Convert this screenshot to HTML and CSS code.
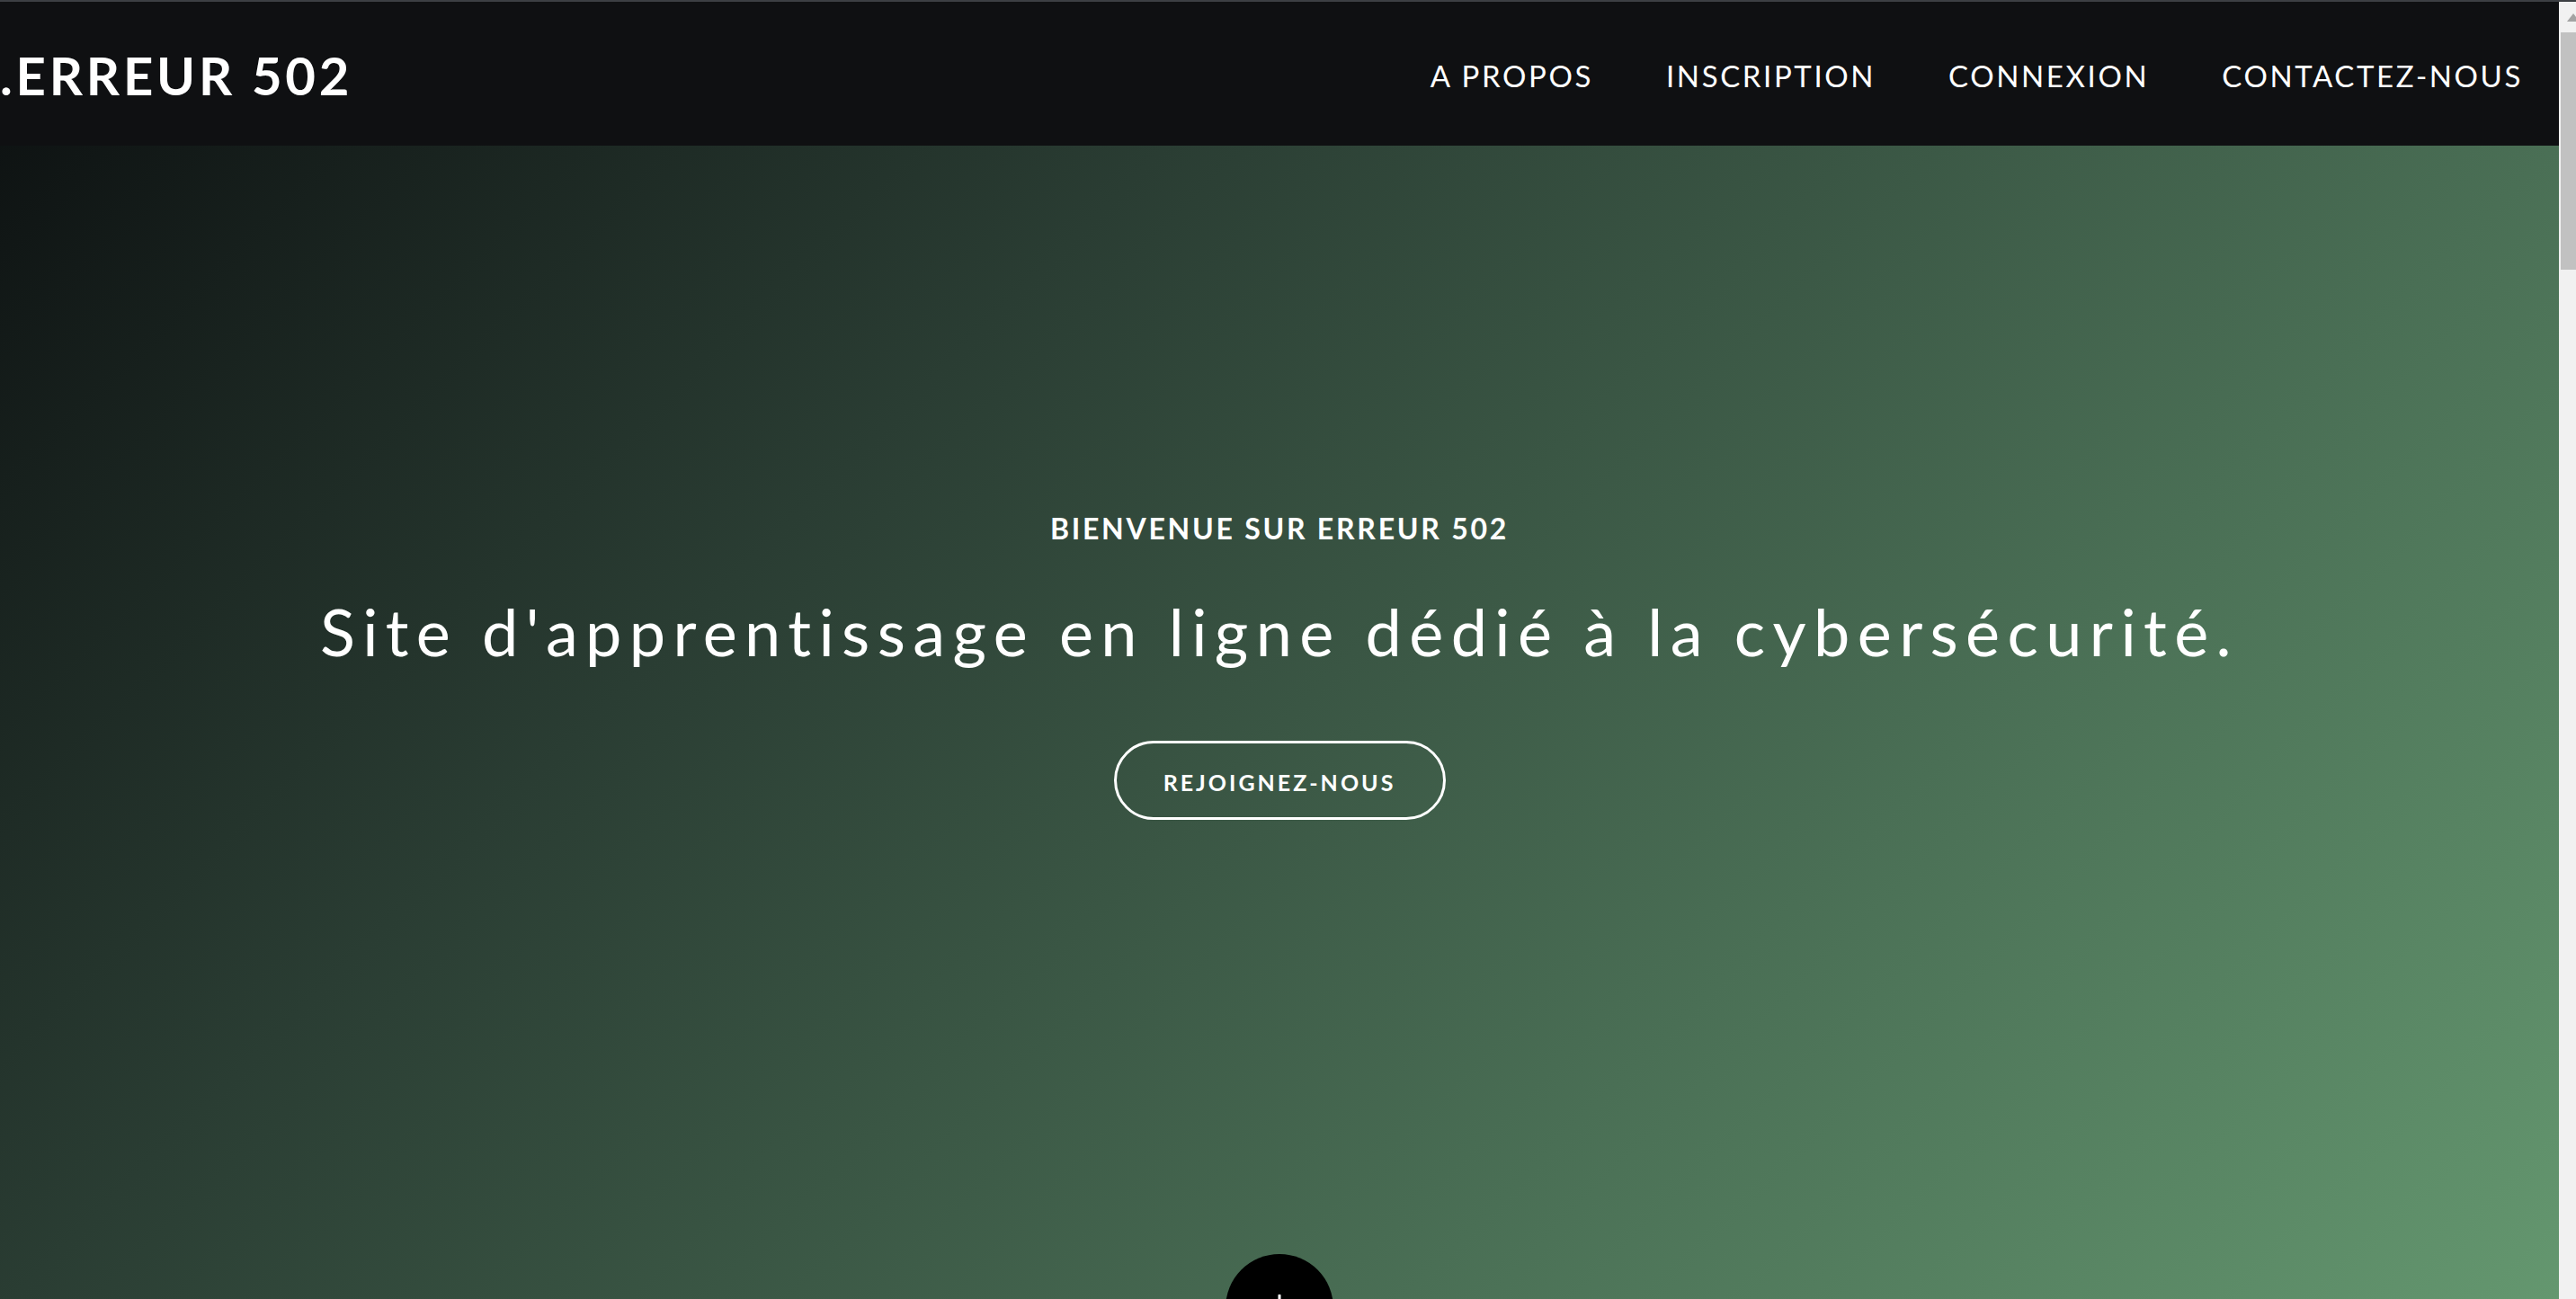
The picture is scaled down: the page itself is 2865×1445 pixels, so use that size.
FILE: index.html
```html
<!DOCTYPE html>
<html lang="fr">
<head>
<meta charset="utf-8">
<title>Erreur 502</title>
<link rel="stylesheet" href="styles.css">
</head>
<body>
<div class="chrome-line"></div>
<div class="window">
  <main class="page">
    <header class="topbar">
      <a class="logo" href="#">.ERREUR 502</a>
      <nav class="menu">
        <a class="menu-link" href="#">A PROPOS</a>
        <a class="menu-link" href="#">INSCRIPTION</a>
        <a class="menu-link" href="#">CONNEXION</a>
        <a class="menu-link" href="#">CONTACTEZ-NOUS</a>
      </nav>
    </header>
    <section class="hero">
      <p class="hero-kicker">BIENVENUE SUR ERREUR 502</p>
      <h1 class="hero-title">Site d'apprentissage en ligne dédié à la cybersécurité.</h1>
      <a class="hero-btn" href="#">REJOIGNEZ-NOUS</a>
      <a class="scroll-down" href="#">
        <svg class="scroll-icon" viewBox="0 0 32 40" width="32" height="40">
          <path d="M16 1 V36 M5 25 L16 36 L27 25" fill="none" stroke="#fff" stroke-width="3" stroke-linecap="round" stroke-linejoin="round"/>
        </svg>
      </a>
    </section>
  </main>
  <div class="scrollbar">
    <div class="scroll-arrow">
      <svg viewBox="0 0 19 32" width="19" height="32"><polygon points="16,13 9,22 23,22" fill="#a3a3a3"/></svg>
    </div>
    <div class="scroll-thumb"></div>
  </div>
</div>
</body>
</html>
```

FILE: styles.css
```css
* { box-sizing: border-box; }
html, body {
  margin: 0;
  padding: 0;
  height: 100%;
  overflow: hidden;
}
body {
  display: flex;
  flex-direction: column;
  font-family: "Lato", "Noto Sans", sans-serif;
  color: #fff;
  background: #0f1012;
}
.chrome-line {
  height: 2px;
  flex: 0 0 2px;
  background: #3c3f43;
}
.window {
  flex: 1;
  display: flex;
  min-height: 0;
}
.page {
  flex: 1;
  position: relative;
  overflow: hidden;
}
.topbar {
  position: absolute;
  top: 0;
  left: 0;
  right: 0;
  height: 160px;
  padding: 4px 40px 0 0;
  background: #0f1012;
  display: flex;
  align-items: center;
  justify-content: space-between;
  z-index: 2;
}
.logo {
  color: #fff;
  text-decoration: none;
  font-weight: 700;
  font-size: 58px;
  line-height: 1;
  letter-spacing: 3.8px;
}
.menu {
  display: flex;
  gap: 81px;
}
.menu-link {
  color: #fff;
  text-decoration: none;
  font-size: 33px;
  line-height: 1;
  letter-spacing: 2.6px;
}
.hero {
  height: 100%;
  display: flex;
  flex-direction: column;
  align-items: center;
  padding-top: 570px;
  background: linear-gradient(135deg, #0b0e0f 0%, #2a3d33 34%, #4a6f55 70%, #64976f 100%);
}
.hero > * { flex-shrink: 0; }
.hero-kicker {
  margin: 0;
  font-weight: 700;
  font-size: 32px;
  line-height: 1;
  letter-spacing: 2.75px;
}
.hero-title {
  margin: 62px 0 0;
  font-weight: 400;
  font-size: 72px;
  line-height: 1;
  letter-spacing: 8.4px;
}
.hero-btn {
  margin-top: 86px;
  width: 369px;
  height: 88px;
  border: 3px solid #fff;
  border-radius: 44px;
  display: flex;
  align-items: center;
  justify-content: center;
  padding-top: 4px;
  color: #fff;
  text-decoration: none;
  font-weight: 700;
  font-size: 25px;
  letter-spacing: 3px;
}
.scroll-down {
  margin-top: 483px;
  width: 120px;
  height: 120px;
  border-radius: 50%;
  background: #000;
  display: flex;
  justify-content: center;
  padding-top: 45px;
}
.scroll-icon { display: block; }
.scrollbar {
  flex: 0 0 19px;
  width: 19px;
  background: #f1f1f1;
  display: flex;
  flex-direction: column;
  overflow: hidden;
}
.scroll-arrow {
  height: 34px;
  flex: 0 0 34px;
}
.scroll-arrow svg { display: block; overflow: hidden; }
.scroll-thumb {
  margin-left: 2px;
  height: 264px;
  background: #c1c1c1;
}
```
